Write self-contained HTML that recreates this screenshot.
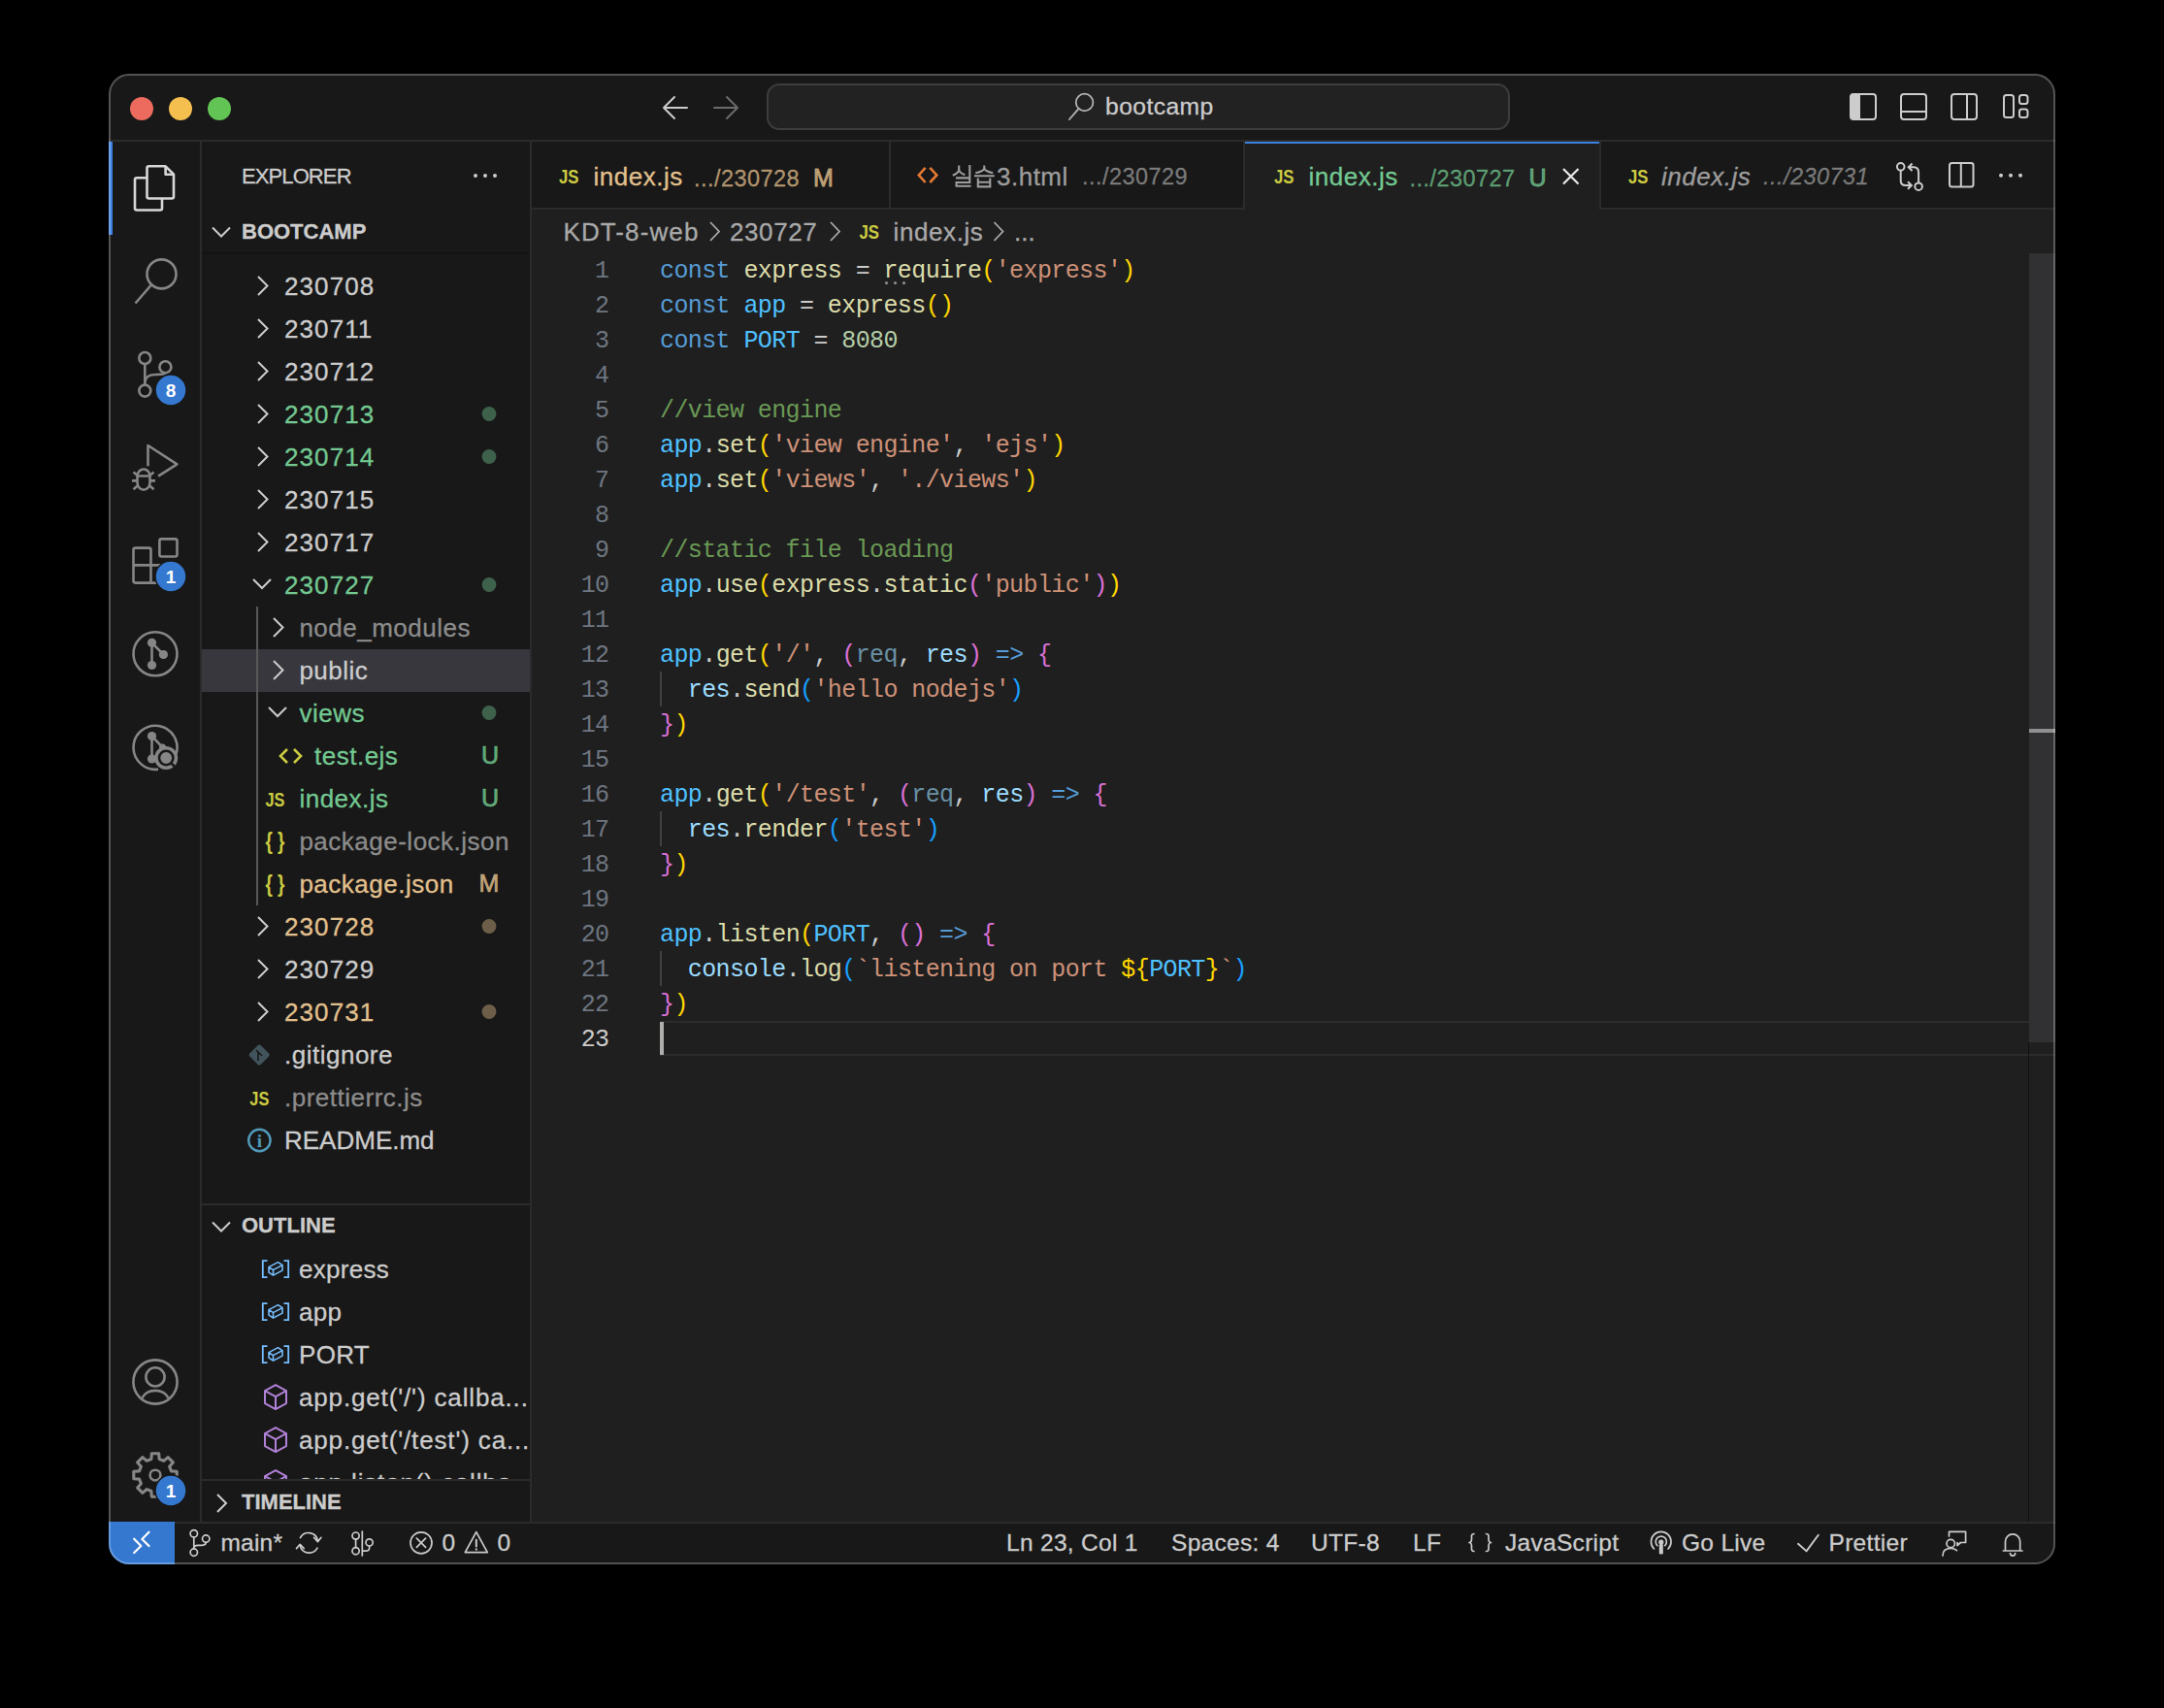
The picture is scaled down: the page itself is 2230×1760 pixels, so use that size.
<!DOCTYPE html>
<html><head><meta charset="utf-8">
<style>
html,body{margin:0;padding:0;background:#000;}
body{width:2230px;height:1760px;overflow:hidden;position:relative;font-family:"Liberation Sans",sans-serif;}
.a{position:absolute;}
#win{position:absolute;left:0;top:0;width:2230px;height:1760px;clip-path:inset(76px 112px 148px 112px round 21px);background:#181818;}
.ui{font-family:"Liberation Sans",sans-serif;font-size:26px;white-space:nowrap;line-height:1;-webkit-text-stroke:0.3px currentColor;}
.mono{font-family:"Liberation Mono",monospace;font-size:25px;letter-spacing:-0.6px;white-space:pre;line-height:36px;margin-top:2px;}
.ln{left:538.5px;width:89px;text-align:right;}
.code{left:680px;}
svg{position:absolute;overflow:visible;}
</style></head>
<body>
<div id="win">
  <!-- title bar -->
  <div class="a" style="left:112px;top:76px;width:2006px;height:70px;background:#181818;"></div>
  <div class="a" style="left:112px;top:144px;width:2006px;height:2px;background:#2b2b2b;"></div>
  <div class="a" style="left:134px;top:100px;width:24px;height:24px;border-radius:50%;background:#ec6a5e;"></div>
  <div class="a" style="left:174px;top:100px;width:24px;height:24px;border-radius:50%;background:#f4bf4f;"></div>
  <div class="a" style="left:214px;top:100px;width:24px;height:24px;border-radius:50%;background:#61c454;"></div>
  <svg style="left:0;top:0" width="2230" height="160">
    <g fill="none" stroke-linecap="round" stroke-linejoin="round">
      <path d="M684 111H708M695 100L684 111L695 122" stroke="#cccccc" stroke-width="2"/>
      <path d="M736 111H760M749 100L760 111L749 122" stroke="#6b6b6b" stroke-width="2"/>
    </g>
    <rect x="791" y="87" width="764" height="46" rx="12" fill="#222222" stroke="#3d3d3d" stroke-width="2"/>
    <g fill="none" stroke="#b5b5b5" stroke-width="1.8">
      <circle cx="1117.6" cy="105.5" r="8.8"/>
      <path d="M1111 112.6L1102 123" stroke-linecap="round"/>
    </g>
    <!-- layout icons -->
    <g fill="none" stroke="#cccccc" stroke-width="2">
      <rect x="1907" y="97" width="26" height="26" rx="3"/>
      <rect x="1959" y="97" width="26" height="26" rx="3"/>
      <path d="M1959 115H1985"/>
      <rect x="2011" y="97" width="26" height="26" rx="3"/>
      <path d="M2027 97V123"/>
      <rect x="2065" y="98" width="10" height="23" rx="2.5"/>
      <rect x="2081" y="98" width="8.5" height="9" rx="2.5"/>
      <rect x="2081" y="112.5" width="8.5" height="8.5" rx="2.5"/>
    </g>
    <path d="M1910 97H1917V123H1910A3 3 0 0 1 1907 120V100A3 3 0 0 1 1910 97Z" fill="#cccccc"/>
  </svg>
  <div class="a ui" style="left:1139px;top:98.2px;color:#cccccc;font-size:24.7px;letter-spacing:0.4px;">bootcamp</div>
  <!-- activity bar -->
  <div class="a" style="left:112px;top:146px;width:94px;height:1422px;background:#181818;"></div>
  <div class="a" style="left:206px;top:146px;width:2px;height:1422px;background:#2b2b2b;"></div>
  <div class="a" style="left:112px;top:146px;width:4px;height:96px;background:#3b82e0;"></div>
  <svg style="left:0;top:0" width="220" height="1600">
    <g fill="none" stroke-linejoin="round" stroke-linecap="butt">
      <!-- explorer -->
      <g stroke="#d7d7d7" stroke-width="2.6">
        <path d="M153.5 171.3H170.6L179 179.7V202.5A2 2 0 0 1 177 204.5H153.5A2 2 0 0 1 151.5 202.5V173.3A2 2 0 0 1 153.5 171.3Z"/>
        <path d="M170.6 171.3V179.7H179"/>
        <path d="M151.5 183.2H141A2 2 0 0 0 139 185.2V214.5A2 2 0 0 0 141 216.5H165A2 2 0 0 0 167 214.5V204.5"/>
      </g>
      <g stroke="#868686" stroke-width="2.6">
        <!-- search -->
        <circle cx="166.5" cy="282.4" r="15"/>
        <path d="M156 293.5L139.5 312.5"/>
        <!-- scm -->
        <circle cx="149.3" cy="369" r="6"/>
        <circle cx="170.4" cy="378.2" r="6"/>
        <circle cx="149.3" cy="402.6" r="6"/>
        <path d="M149.3 375V396.6"/>
        <path d="M149.3 394C150 387 155 386 161 386C167 386 170 385 170.4 384.2"/>
        <!-- debug -->
        <path d="M152.5 480.2V459L182.4 478.4L163.1 490.7"/>
        <path d="M141.5 490.5V497A6.5 7.8 0 0 0 154.5 497V490.5A6.5 7 0 0 0 141.5 490.5Z"/>
        <path d="M141.5 490.5H154.5M137.5 486.5L141.8 490M158.5 486.5L154.2 490M136 495.4H141.5M154.5 495.4H160M137.5 504.3L141.8 500.5M158.5 504.3L154.2 500.5"/>
        <!-- extensions -->
        <rect x="164.4" y="555.4" width="18.1" height="18.1" rx="2"/>
        <path d="M155.5 582.4V566.6A2 2 0 0 0 153.5 564.6H139.5A2 2 0 0 0 137.5 566.6V598.6A2 2 0 0 0 139.5 600.6H173.5V582.4H137.5M155.5 582.4V600.6"/>
        <!-- gitlens -->
        <circle cx="160" cy="673.8" r="22.5"/>
        <path d="M156.5 662.3V685.5M156.5 662.3L168.4 674.5"/>
        <!-- gitlens inspect -->
        <path d="M181.5 777A22.5 22.5 0 1 0 163 792.6"/>
        <path d="M156.5 758.6V782M156.5 758.6L167.5 770"/>
        <!-- account -->
        <circle cx="160" cy="1424" r="22.6"/>
        <circle cx="160" cy="1418.9" r="9.6"/>
        <path d="M146.5 1440.5A14.5 12 0 0 1 173.5 1440.5"/>
        <!-- gear -->
        <path stroke-width="3.1" d="M155.9 1503.5 L156.3 1497.8 L163.7 1497.8 L164.1 1503.5 L168.8 1505.4 L173.1 1501.7 L178.3 1506.9 L174.6 1511.2 L176.5 1515.9 L182.2 1516.3 L182.2 1523.7 L176.5 1524.1 L174.6 1528.8 L178.3 1533.1 L173.1 1538.3 L168.8 1534.6 L164.1 1536.5 L163.7 1542.2 L156.3 1542.2 L155.9 1536.5 L151.2 1534.6 L146.9 1538.3 L141.7 1533.1 L145.4 1528.8 L143.5 1524.1 L137.8 1523.7 L137.8 1516.3 L143.5 1515.9 L145.4 1511.2 L141.7 1506.9 L146.9 1501.7 L151.2 1505.4Z"/>
        <circle cx="160" cy="1520.1" r="5.4"/>
      </g>
    </g>
    <g fill="#868686">
      <circle cx="156.5" cy="662.3" r="4.6"/><circle cx="168.4" cy="674.5" r="4.6"/><circle cx="156.5" cy="685.5" r="4.6"/>
      <circle cx="156.5" cy="758.6" r="4.6"/><circle cx="156.5" cy="782" r="4.6"/><circle cx="167.5" cy="770" r="3.5"/>
      <circle cx="171.2" cy="781" r="12"/>
    </g>
    <circle cx="171.2" cy="781" r="7.2" fill="none" stroke="#181818" stroke-width="2.6"/>
    <path d="M176.5 786.5L180 790" stroke="#181818" stroke-width="2.5"/>
    <!-- badges -->
    <g fill="#3478d0" stroke="#181818" stroke-width="1.5">
      <circle cx="176" cy="402" r="16"/>
      <circle cx="176" cy="594" r="16"/>
      <circle cx="176" cy="1536" r="16"/>
    </g>
    <g fill="#ffffff" font-family="Liberation Sans" font-weight="bold" font-size="19" text-anchor="middle">
      <text x="176" y="409">8</text>
      <text x="176" y="601">1</text>
      <text x="176" y="1543">1</text>
    </g>
  </svg>
  <!-- sidebar -->
  <div class="a" style="left:208px;top:146px;width:338px;height:1422px;background:#181818;"></div>
  <div class="a" style="left:546px;top:146px;width:2px;height:1422px;background:#2b2b2b;"></div>
  <!-- sidebar content -->
  <div class="a ui" style="left:249px;top:171px;color:#cccccc;font-size:22px;letter-spacing:-0.9px;">EXPLORER</div>
  <svg style="left:0;top:0" width="560" height="1600">
    <g fill="#cccccc"><circle cx="490" cy="181" r="2"/><circle cx="500" cy="181" r="2"/><circle cx="510" cy="181" r="2"/></g>
    <path d="M219 234.5L228 243.5L237 234.5" stroke="#cccccc" stroke-width="2" fill="none"/>
    <path d="M219 1259.5L228 1268.5L237 1259.5" stroke="#cccccc" stroke-width="2" fill="none"/>
    <path d="M224 1540L233 1549L224 1558" stroke="#cccccc" stroke-width="2" fill="none"/>
  </svg>
  <div class="a ui" style="left:249px;top:228px;color:#cccccc;font-size:22px;font-weight:bold;">BOOTCAMP</div>
  <div class="a" style="left:208px;top:260px;width:338px;height:2px;background:#111313;"></div>
<div class="a ui" style="left:293.0px;top:282px;color:#cccccc;letter-spacing:1.1px;">230708</div>
<div class="a ui" style="left:293.0px;top:326px;color:#cccccc;letter-spacing:1.1px;">230711</div>
<div class="a ui" style="left:293.0px;top:370px;color:#cccccc;letter-spacing:1.1px;">230712</div>
<div class="a ui" style="left:293.0px;top:414px;color:#73c991;letter-spacing:1.1px;">230713</div>
<div class="a ui" style="left:293.0px;top:458px;color:#73c991;letter-spacing:1.1px;">230714</div>
<div class="a ui" style="left:293.0px;top:502px;color:#cccccc;letter-spacing:1.1px;">230715</div>
<div class="a ui" style="left:293.0px;top:546px;color:#cccccc;letter-spacing:1.1px;">230717</div>
<div class="a ui" style="left:293.0px;top:590px;color:#73c991;letter-spacing:1.1px;">230727</div>
<div class="a ui" style="left:308.4px;top:634px;color:#8c8c8c;letter-spacing:0.5px;">node_modules</div>
<div class="a" style="left:208px;top:669px;width:338px;height:44px;background:#37373d;"></div>
<div class="a ui" style="left:308.4px;top:678px;color:#cccccc;letter-spacing:0.5px;">public</div>
<div class="a ui" style="left:308.4px;top:722px;color:#73c991;letter-spacing:0.5px;">views</div>
<div class="a ui" style="left:324.0px;top:766px;color:#73c991;letter-spacing:0.5px;">test.ejs</div>
<div class="a ui" style="left:496px;top:766px;color:rgba(115,201,145,0.78);font-size:25px;-webkit-text-stroke:0.7px currentColor;">U</div>
<div class="a ui" style="left:308.4px;top:810px;color:#73c991;letter-spacing:0.5px;">index.js</div>
<div class="a ui" style="left:496px;top:810px;color:rgba(115,201,145,0.78);font-size:25px;-webkit-text-stroke:0.7px currentColor;">U</div>
<div class="a ui" style="left:308.4px;top:854px;color:#8c8c8c;letter-spacing:0.5px;">package-lock.json</div>
<div class="a ui" style="left:308.4px;top:898px;color:#e2c08d;letter-spacing:0.5px;">package.json</div>
<div class="a ui" style="left:493.5px;top:898px;color:rgba(226,192,141,0.78);font-size:25px;-webkit-text-stroke:0.7px currentColor;">M</div>
<div class="a ui" style="left:293.0px;top:942px;color:#e2c08d;letter-spacing:1.1px;">230728</div>
<div class="a ui" style="left:293.0px;top:986px;color:#cccccc;letter-spacing:1.1px;">230729</div>
<div class="a ui" style="left:293.0px;top:1030px;color:#e2c08d;letter-spacing:1.1px;">230731</div>
<div class="a ui" style="left:293.0px;top:1074px;color:#cccccc;letter-spacing:0.5px;">.gitignore</div>
<div class="a ui" style="left:293.0px;top:1118px;color:#8c8c8c;letter-spacing:0.5px;">.prettierrc.js</div>
<div class="a ui" style="left:293.0px;top:1162px;color:#cccccc;letter-spacing:0.0px;">README.md</div>
<div class="a" style="left:264px;top:625px;width:2px;height:308px;background:#585858;"></div>
<svg style="left:0;top:0" width="560" height="1600">
<path d="M266 285L275.5 294.5L266 304" stroke="#cccccc" stroke-width="2" fill="none"/>
<path d="M266 329L275.5 338.5L266 348" stroke="#cccccc" stroke-width="2" fill="none"/>
<path d="M266 373L275.5 382.5L266 392" stroke="#cccccc" stroke-width="2" fill="none"/>
<path d="M266 417L275.5 426.5L266 436" stroke="#cccccc" stroke-width="2" fill="none"/>
<circle cx="504" cy="426.5" r="7.4" fill="rgba(115,201,145,0.42)"/>
<path d="M266 461L275.5 470.5L266 480" stroke="#cccccc" stroke-width="2" fill="none"/>
<circle cx="504" cy="470.5" r="7.4" fill="rgba(115,201,145,0.42)"/>
<path d="M266 505L275.5 514.5L266 524" stroke="#cccccc" stroke-width="2" fill="none"/>
<path d="M266 549L275.5 558.5L266 568" stroke="#cccccc" stroke-width="2" fill="none"/>
<path d="M261 597L270 606L279 597" stroke="#cccccc" stroke-width="2" fill="none"/>
<circle cx="504" cy="602.5" r="7.4" fill="rgba(115,201,145,0.42)"/>
<path d="M282 637L291.5 646.5L282 656" stroke="#cccccc" stroke-width="2" fill="none"/>
<path d="M282 681L291.5 690.5L282 700" stroke="#cccccc" stroke-width="2" fill="none"/>
<path d="M277 729L286 738L295 729" stroke="#cccccc" stroke-width="2" fill="none"/>
<circle cx="504" cy="734.5" r="7.4" fill="rgba(115,201,145,0.42)"/>
<path d="M296 772L289 779L296 786M303 772L310 779L303 786" stroke="#cbcb41" stroke-width="2.6" fill="none"/>
<text x="273.4" y="831" textLength="20" lengthAdjust="spacingAndGlyphs" font-family="Liberation Sans" font-weight="bold" font-size="21" fill="#cbcb41">JS</text>
<text x="273.4" y="875" textLength="20" lengthAdjust="spacingAndGlyphs" font-family="Liberation Sans" font-size="23" font-weight="bold" fill="#cbcb41">{ }</text>
<text x="273.4" y="919" textLength="20" lengthAdjust="spacingAndGlyphs" font-family="Liberation Sans" font-size="23" font-weight="bold" fill="#cbcb41">{ }</text>
<path d="M266 945L275.5 954.5L266 964" stroke="#cccccc" stroke-width="2" fill="none"/>
<circle cx="504" cy="954.5" r="7.4" fill="rgba(226,192,141,0.42)"/>
<path d="M266 989L275.5 998.5L266 1008" stroke="#cccccc" stroke-width="2" fill="none"/>
<path d="M266 1033L275.5 1042.5L266 1052" stroke="#cccccc" stroke-width="2" fill="none"/>
<circle cx="504" cy="1042.5" r="7.4" fill="rgba(226,192,141,0.42)"/>
<rect x="259.2" y="1079" width="16" height="16" rx="2" transform="rotate(45 267.2 1087)" fill="#41535b"/>
<path d="M264 1082L270 1088M266 1084V1093" stroke="#181818" stroke-width="1.6" fill="none"/>
<text x="257.3" y="1139" textLength="20" lengthAdjust="spacingAndGlyphs" font-family="Liberation Sans" font-weight="bold" font-size="21" fill="#cbcb41">JS</text>
<circle cx="267.4" cy="1175" r="11.2" stroke="#519aba" stroke-width="2.4" fill="none"/>
<text x="267.4" y="1182" text-anchor="middle" font-family="Liberation Serif" font-weight="bold" font-size="19" fill="#519aba">i</text>
</svg>
  <div class="a" style="left:208px;top:1240px;width:338px;height:2px;background:#2b2b2b;"></div>
  <div class="a ui" style="left:249px;top:1252px;color:#cccccc;font-size:22px;font-weight:bold;">OUTLINE</div>
  <!--OUTLINE-->
<div class="a" style="left:208px;top:1286px;width:338px;height:238px;overflow:hidden;">
<div class="a" style="left:-208px;top:-1286px;width:560px;height:1600px;">
<div class="a ui" style="left:308px;top:1294.6px;color:#cccccc;letter-spacing:0.3px;">express</div>
<div class="a ui" style="left:308px;top:1338.6px;color:#cccccc;letter-spacing:0.3px;">app</div>
<div class="a ui" style="left:308px;top:1382.6px;color:#cccccc;letter-spacing:0.3px;">PORT</div>
<div class="a ui" style="left:308px;top:1426.6px;color:#cccccc;letter-spacing:0.85px;">app.get('/') callba...</div>
<div class="a ui" style="left:308px;top:1470.6px;color:#cccccc;letter-spacing:0.85px;">app.get('/test') ca...</div>
<div class="a ui" style="left:308px;top:1514.6px;color:#cccccc;letter-spacing:0.85px;">app.listen() callba...</div>
<svg style="left:0;top:0" width="560" height="1600">
<path d="M275.5 1299.1H270.8V1316.1H275.5M292.5 1299.1H297.2V1316.1H292.5" stroke="#75beff" stroke-width="1.8" fill="none"/>
<path d="M277 1305.6L286.5 1300.6L291 1303.6V1309.1L281.5 1314.1L277 1311.1ZM277 1305.6L281.5 1308.6L291 1303.6M281.5 1308.6V1314.1" stroke="#75beff" stroke-width="1.6" fill="none" stroke-linejoin="round"/>
<path d="M275.5 1343.1H270.8V1360.1H275.5M292.5 1343.1H297.2V1360.1H292.5" stroke="#75beff" stroke-width="1.8" fill="none"/>
<path d="M277 1349.6L286.5 1344.6L291 1347.6V1353.1L281.5 1358.1L277 1355.1ZM277 1349.6L281.5 1352.6L291 1347.6M281.5 1352.6V1358.1" stroke="#75beff" stroke-width="1.6" fill="none" stroke-linejoin="round"/>
<path d="M275.5 1387.1H270.8V1404.1H275.5M292.5 1387.1H297.2V1404.1H292.5" stroke="#75beff" stroke-width="1.8" fill="none"/>
<path d="M277 1393.6L286.5 1388.6L291 1391.6V1397.1L281.5 1402.1L277 1399.1ZM277 1393.6L281.5 1396.6L291 1391.6M281.5 1396.6V1402.1" stroke="#75beff" stroke-width="1.6" fill="none" stroke-linejoin="round"/>
<path d="M284 1427.1L295 1433.1V1446.1L284 1452.1L273 1446.1V1433.1ZM273 1433.1L284 1439.1L295 1433.1M284 1439.1V1452.1" stroke="#b180d7" stroke-width="2" fill="none" stroke-linejoin="round"/>
<path d="M284 1471.1L295 1477.1V1490.1L284 1496.1L273 1490.1V1477.1ZM273 1477.1L284 1483.1L295 1477.1M284 1483.1V1496.1" stroke="#b180d7" stroke-width="2" fill="none" stroke-linejoin="round"/>
<path d="M284 1515.1L295 1521.1V1534.1L284 1540.1L273 1534.1V1521.1ZM273 1521.1L284 1527.1L295 1521.1M284 1527.1V1540.1" stroke="#b180d7" stroke-width="2" fill="none" stroke-linejoin="round"/>
</svg>
</div></div>
  <div class="a" style="left:208px;top:1524px;width:338px;height:2px;background:#2b2b2b;"></div>
  <div class="a ui" style="left:249px;top:1537px;color:#cccccc;font-size:22px;font-weight:bold;">TIMELINE</div>

  <!-- editor -->
  <div class="a" style="left:548px;top:146px;width:1570px;height:68px;background:#181818;"></div>
  <div class="a" style="left:548px;top:214px;width:1570px;height:2px;background:#2b2b2b;"></div>
  <div class="a" style="left:548px;top:216px;width:1570px;height:1352px;background:#1f1f1f;"></div>
  <!-- editor content -->
  <div class="a" style="left:680px;top:1052px;width:1438px;height:36px;box-sizing:border-box;border-top:2px solid #2c2c2c;border-bottom:2px solid #2c2c2c;"></div>
  <div class="a" style="left:680px;top:692px;width:2px;height:36px;background:#404040;"></div>
  <div class="a" style="left:680px;top:836px;width:2px;height:36px;background:#404040;"></div>
  <div class="a" style="left:680px;top:980px;width:2px;height:36px;background:#404040;"></div>
  <div class="a" style="left:680px;top:1053px;width:4px;height:34px;background:#aeafad;"></div>
  <svg style="left:0;top:0" width="1000" height="300"><g fill="#8b8b8b"><circle cx="913.5" cy="291.6" r="1.6"/><circle cx="922.5" cy="291.6" r="1.6"/><circle cx="931.5" cy="291.6" r="1.6"/></g></svg>
<div class="a mono ln" style="top:260px;color:#6e7681;">1</div>
<div class="a mono code" style="top:260px;"><span style="color:#569cd6">const</span> <span style="color:#dcdcaa">express</span><span style="color:#cccccc"> = </span><span style="color:#dcdcaa">require</span><span style="color:#ffd700">(</span><span style="color:#ce9178">&#x27;express&#x27;</span><span style="color:#ffd700">)</span></div>
<div class="a mono ln" style="top:296px;color:#6e7681;">2</div>
<div class="a mono code" style="top:296px;"><span style="color:#569cd6">const</span> <span style="color:#4fc1ff">app</span><span style="color:#cccccc"> = </span><span style="color:#dcdcaa">express</span><span style="color:#ffd700">()</span></div>
<div class="a mono ln" style="top:332px;color:#6e7681;">3</div>
<div class="a mono code" style="top:332px;"><span style="color:#569cd6">const</span> <span style="color:#4fc1ff">PORT</span><span style="color:#cccccc"> = </span><span style="color:#b5cea8">8080</span></div>
<div class="a mono ln" style="top:368px;color:#6e7681;">4</div>
<div class="a mono ln" style="top:404px;color:#6e7681;">5</div>
<div class="a mono code" style="top:404px;"><span style="color:#6a9955">//view engine</span></div>
<div class="a mono ln" style="top:440px;color:#6e7681;">6</div>
<div class="a mono code" style="top:440px;"><span style="color:#4fc1ff">app</span><span style="color:#cccccc">.</span><span style="color:#dcdcaa">set</span><span style="color:#ffd700">(</span><span style="color:#ce9178">&#x27;view engine&#x27;</span><span style="color:#cccccc">, </span><span style="color:#ce9178">&#x27;ejs&#x27;</span><span style="color:#ffd700">)</span></div>
<div class="a mono ln" style="top:476px;color:#6e7681;">7</div>
<div class="a mono code" style="top:476px;"><span style="color:#4fc1ff">app</span><span style="color:#cccccc">.</span><span style="color:#dcdcaa">set</span><span style="color:#ffd700">(</span><span style="color:#ce9178">&#x27;views&#x27;</span><span style="color:#cccccc">, </span><span style="color:#ce9178">&#x27;./views&#x27;</span><span style="color:#ffd700">)</span></div>
<div class="a mono ln" style="top:512px;color:#6e7681;">8</div>
<div class="a mono ln" style="top:548px;color:#6e7681;">9</div>
<div class="a mono code" style="top:548px;"><span style="color:#6a9955">//static file loading</span></div>
<div class="a mono ln" style="top:584px;color:#6e7681;">10</div>
<div class="a mono code" style="top:584px;"><span style="color:#4fc1ff">app</span><span style="color:#cccccc">.</span><span style="color:#dcdcaa">use</span><span style="color:#ffd700">(</span><span style="color:#dcdcaa">express</span><span style="color:#cccccc">.</span><span style="color:#dcdcaa">static</span><span style="color:#da70d6">(</span><span style="color:#ce9178">&#x27;public&#x27;</span><span style="color:#da70d6">)</span><span style="color:#ffd700">)</span></div>
<div class="a mono ln" style="top:620px;color:#6e7681;">11</div>
<div class="a mono ln" style="top:656px;color:#6e7681;">12</div>
<div class="a mono code" style="top:656px;"><span style="color:#4fc1ff">app</span><span style="color:#cccccc">.</span><span style="color:#dcdcaa">get</span><span style="color:#ffd700">(</span><span style="color:#ce9178">&#x27;/&#x27;</span><span style="color:#cccccc">, </span><span style="color:#da70d6">(</span><span style="color:rgba(156,220,254,0.62)">req</span><span style="color:#cccccc">, </span><span style="color:#9cdcfe">res</span><span style="color:#da70d6">)</span> <span style="color:#569cd6">=&gt;</span> <span style="color:#da70d6">{</span></div>
<div class="a mono ln" style="top:692px;color:#6e7681;">13</div>
<div class="a mono code" style="top:692px;">  <span style="color:#9cdcfe">res</span><span style="color:#cccccc">.</span><span style="color:#dcdcaa">send</span><span style="color:#179fff">(</span><span style="color:#ce9178">&#x27;hello nodejs&#x27;</span><span style="color:#179fff">)</span></div>
<div class="a mono ln" style="top:728px;color:#6e7681;">14</div>
<div class="a mono code" style="top:728px;"><span style="color:#da70d6">}</span><span style="color:#ffd700">)</span></div>
<div class="a mono ln" style="top:764px;color:#6e7681;">15</div>
<div class="a mono ln" style="top:800px;color:#6e7681;">16</div>
<div class="a mono code" style="top:800px;"><span style="color:#4fc1ff">app</span><span style="color:#cccccc">.</span><span style="color:#dcdcaa">get</span><span style="color:#ffd700">(</span><span style="color:#ce9178">&#x27;/test&#x27;</span><span style="color:#cccccc">, </span><span style="color:#da70d6">(</span><span style="color:rgba(156,220,254,0.62)">req</span><span style="color:#cccccc">, </span><span style="color:#9cdcfe">res</span><span style="color:#da70d6">)</span> <span style="color:#569cd6">=&gt;</span> <span style="color:#da70d6">{</span></div>
<div class="a mono ln" style="top:836px;color:#6e7681;">17</div>
<div class="a mono code" style="top:836px;">  <span style="color:#9cdcfe">res</span><span style="color:#cccccc">.</span><span style="color:#dcdcaa">render</span><span style="color:#179fff">(</span><span style="color:#ce9178">&#x27;test&#x27;</span><span style="color:#179fff">)</span></div>
<div class="a mono ln" style="top:872px;color:#6e7681;">18</div>
<div class="a mono code" style="top:872px;"><span style="color:#da70d6">}</span><span style="color:#ffd700">)</span></div>
<div class="a mono ln" style="top:908px;color:#6e7681;">19</div>
<div class="a mono ln" style="top:944px;color:#6e7681;">20</div>
<div class="a mono code" style="top:944px;"><span style="color:#4fc1ff">app</span><span style="color:#cccccc">.</span><span style="color:#dcdcaa">listen</span><span style="color:#ffd700">(</span><span style="color:#4fc1ff">PORT</span><span style="color:#cccccc">, </span><span style="color:#da70d6">()</span> <span style="color:#569cd6">=&gt;</span> <span style="color:#da70d6">{</span></div>
<div class="a mono ln" style="top:980px;color:#6e7681;">21</div>
<div class="a mono code" style="top:980px;">  <span style="color:#9cdcfe">console</span><span style="color:#cccccc">.</span><span style="color:#dcdcaa">log</span><span style="color:#179fff">(</span><span style="color:#ce9178">`listening on port </span><span style="color:#ffd700">${</span><span style="color:#4fc1ff">PORT</span><span style="color:#ffd700">}</span><span style="color:#ce9178">`</span><span style="color:#179fff">)</span></div>
<div class="a mono ln" style="top:1016px;color:#6e7681;">22</div>
<div class="a mono code" style="top:1016px;"><span style="color:#da70d6">}</span><span style="color:#ffd700">)</span></div>
<div class="a mono ln" style="top:1052px;color:#cccccc;">23</div>

  <!-- scrollbar -->
  <div class="a" style="left:2091px;top:261px;width:27px;height:813px;background:#313134;"></div>
  <div class="a" style="left:2091px;top:751px;width:27px;height:4px;background:#8f8f8f;"></div>
  <div class="a" style="left:2090px;top:1074px;width:1px;height:494px;background:#111111;"></div>
  <!-- tabs -->
  <div class="a" style="left:916px;top:146px;width:2px;height:68px;background:#2b2b2b;"></div>
  <div class="a" style="left:1281px;top:146px;width:2px;height:68px;background:#2b2b2b;"></div>
  <div class="a" style="left:1283px;top:146px;width:365px;height:70px;background:#1f1f1f;"></div>
  <div class="a" style="left:1283px;top:146px;width:365px;height:2px;background:#3b82e0;"></div>
  <div class="a" style="left:1648px;top:146px;width:2px;height:68px;background:#2b2b2b;"></div>
  <svg style="left:0;top:0" width="2230" height="270">
    <g font-family="Liberation Sans" font-weight="bold" font-size="21" fill="#cbcb41">
      <text x="576" y="188.5" textLength="20.5" lengthAdjust="spacingAndGlyphs">JS</text>
      <text x="1313" y="188.5" textLength="20.5" lengthAdjust="spacingAndGlyphs">JS</text>
      <text x="1678" y="188.5" textLength="20.5" lengthAdjust="spacingAndGlyphs">JS</text>
      <text x="885.5" y="246" textLength="20.5" lengthAdjust="spacingAndGlyphs">JS</text>
    </g>
    <path d="M953.6 172.8L946.8 180.4L953.6 188M958.3 172.8L965.3 180.4L958.3 188" stroke="#e37933" stroke-width="2.6" fill="none"/>
    <!-- 실습 -->
    <g stroke="#9d9d9d" stroke-width="2.1" fill="none">
      <path d="M988.2 170.5V174.5C988.2 177 985 179.5 981.8 180.8M988.2 174.5C988.4 177 991 179 994.3 180.3"/>
      <path d="M999.3 169.9V184M985 183.4H999.3V188H985.6V191.7H1000.6"/>
      <path d="M1014.3 170.5V173C1014.3 175.5 1009 177.5 1005.3 178.3M1014.3 173C1014.3 175.5 1019.5 177.5 1023.2 178.3M1004 181.2H1024.8"/>
      <path d="M1007.8 183.6V192.4H1020.3V183.6M1007.8 187.8H1020.3"/>
    </g>
    <!-- close x -->
    <path d="M1611 174L1626.5 189.5M1626.5 174L1611 189.5" stroke="#e8e8e8" stroke-width="2.2" fill="none"/>
    <!-- editor actions -->
    <g fill="none" stroke="#cccccc" stroke-width="2">
      <circle cx="1958.7" cy="171.8" r="3.8"/>
      <circle cx="1977.1" cy="192.2" r="3.8"/>
      <path d="M1958.7 175.6V186C1958.7 189.5 1960.5 191 1963.5 191H1969.8M1966 187.2L1969.8 191L1966 194.8"/>
      <path d="M1977.1 188.4V178C1977.1 174.5 1975.3 172.3 1972.3 172.3H1967M1970.5 168.5L1966.7 172.3L1970.5 176.1"/>
      <rect x="2009" y="168" width="24.5" height="24.5" rx="2.5"/>
      <path d="M2020.8 168V192.5"/>
    </g>
    <g fill="#cccccc"><circle cx="2062" cy="180.8" r="2"/><circle cx="2072" cy="180.8" r="2"/><circle cx="2082" cy="180.8" r="2"/></g>
    <!-- breadcrumb chevrons -->
    <g fill="none" stroke="#a9a9a9" stroke-width="1.8">
      <path d="M732 229L741 238.5L732 248"/>
      <path d="M856 229L865 238.5L856 248"/>
      <path d="M1024.5 229L1033.5 238.5L1024.5 248"/>
    </g>
  </svg>
  <div class="a ui" style="left:611.5px;top:169px;color:#e2c08d;letter-spacing:0.5px;">index.js</div>
  <div class="a ui" style="left:715px;top:170.5px;color:rgba(226,192,141,0.72);font-size:23.5px;letter-spacing:0.45px;">.../230728<span style="margin-left:14px;font-size:25px;-webkit-text-stroke:0.9px currentColor;">M</span></div>
  <div class="a ui" style="left:1027px;top:169px;color:#9d9d9d;letter-spacing:0.5px;">3.html</div>
  <div class="a ui" style="left:1115px;top:170.5px;color:rgba(157,157,157,0.72);font-size:23.5px;letter-spacing:0.45px;">.../230729</div>
  <div class="a ui" style="left:1348.5px;top:169px;color:#73c991;letter-spacing:0.5px;">index.js</div>
  <div class="a ui" style="left:1452.5px;top:170.5px;color:rgba(115,201,145,0.72);font-size:23.5px;letter-spacing:0.45px;">.../230727<span style="margin-left:14px;font-size:25px;-webkit-text-stroke:0.9px currentColor;">U</span></div>
  <div class="a ui" style="left:1712px;top:169px;color:#9d9d9d;font-style:italic;letter-spacing:0.5px;">index.js</div>
  <div class="a ui" style="left:1817px;top:170.5px;color:rgba(157,157,157,0.72);font-size:23.5px;font-style:italic;letter-spacing:0.45px;">.../230731</div>
  <!-- breadcrumbs -->
  <div class="a ui" style="left:580.5px;top:226px;color:#a9a9a9;letter-spacing:1.1px;">KDT-8-web</div>
  <div class="a ui" style="left:752px;top:226px;color:#a9a9a9;letter-spacing:0.6px;">230727</div>
  <div class="a ui" style="left:920.5px;top:226px;color:#a9a9a9;letter-spacing:0.6px;">index.js</div>
  <div class="a ui" style="left:1045px;top:226px;color:#a9a9a9;">...</div>
  <!-- status bar -->
  <div class="a" style="left:112px;top:1568px;width:2006px;height:44px;background:#181818;"></div>
  <div class="a" style="left:112px;top:1568px;width:2006px;height:2px;background:#2b2b2b;"></div>
  <div class="a" style="left:112px;top:1568px;width:68px;height:44px;background:#3478d0;"></div>
  <svg style="left:0;top:1540px" width="2230" height="80" viewBox="0 1540 2230 80">
    <g fill="none" stroke-linecap="round" stroke-linejoin="round">
      <path d="M138.2 1585.7L145.3 1592.9L138.2 1600.1M153.5 1578.7L146.4 1585.9L153.5 1593.1" stroke="#ffffff" stroke-width="2.2"/>
      <g stroke="#cccccc" stroke-width="1.7">
        <!-- branch -->
        <circle cx="199.8" cy="1580.3" r="3.7"/><circle cx="199.8" cy="1599.6" r="3.7"/><circle cx="212.2" cy="1585.6" r="3.7"/>
        <path d="M199.8 1584V1595.9M199.8 1595.5C199.8 1593 201 1592.3 204 1592.3H208C211 1592.3 212.2 1591 212.2 1589.3"/>
        <!-- sync -->
        <path d="M309.5 1584.5A9.6 9.6 0 0 1 327.3 1587.2M327 1595.2A9.6 9.6 0 0 1 309.2 1592.6"/>
        <path d="M323.5 1584.3L327.4 1588.6L331 1584.3M305.5 1595.6L309.2 1591.3L313.2 1595.6"/>
        <!-- git graph -->
        <circle cx="366.6" cy="1582.6" r="3.6"/><circle cx="366.6" cy="1598.2" r="3.6"/><circle cx="380.6" cy="1589.4" r="3.6"/>
        <path d="M366.6 1586.2V1594.6M373.3 1578V1603M380.6 1593V1595C380.6 1597 379 1598.2 377 1598.2H373.3"/>
        <!-- errors -->
        <circle cx="434" cy="1589.8" r="11"/>
        <path d="M429.4 1585.2L438.6 1594.4M438.6 1585.2L429.4 1594.4"/>
        <path d="M490.8 1578.6L502.3 1599.6H479.3Z"/>
        <path d="M490.8 1586.8V1593.6M490.8 1596.2V1596.8" stroke-width="2"/>
        <!-- right side -->
        <path d="M1519 1580.5C1516 1580.5 1516.5 1582.5 1516.5 1585.5C1516.5 1588.5 1515.5 1589.5 1514 1589.5C1515.5 1589.5 1516.5 1590.5 1516.5 1593.5C1516.5 1596.5 1516 1598.5 1519 1598.5M1531.5 1580.5C1534.5 1580.5 1534 1582.5 1534 1585.5C1534 1588.5 1535 1589.5 1536.5 1589.5C1535 1589.5 1534 1590.5 1534 1593.5C1534 1596.5 1534.5 1598.5 1531.5 1598.5"/>
        <path d="M1704.5 1596A10.3 10.3 0 1 1 1719 1596M1707.8 1592.6A5.6 5.6 0 1 1 1715.8 1592.6"/>
        <path d="M1853 1590.8L1861.5 1598.4L1873.8 1581.7" stroke-width="1.9"/>
        <circle cx="2010.2" cy="1590.5" r="4.2"/>
        <path d="M2002 1603C2002 1597.5 2005.5 1595.5 2010.2 1595.5C2013 1595.5 2015 1596.3 2016.5 1597.7M2008.5 1583V1578.3H2025.6V1589.5H2020.5L2017 1592.5V1589.5"/>
        <path d="M2066.5 1598V1588.5A7.6 7.6 0 0 1 2081.7 1588.5V1598H2064.3H2084M2071.5 1600.5A2.6 2.6 0 0 0 2076.7 1600.5"/>
      </g>
    </g>
    <g fill="#cccccc"><circle cx="1711.8" cy="1589" r="2.6"/><rect x="1709.8" y="1591" width="4" height="10.5" rx="1.2"/></g>
  </svg>
  <div class="a ui" style="left:227.5px;top:1578px;color:#cccccc;font-size:24.5px;letter-spacing:0.2px;">main*</div>
  <div class="a ui" style="left:455.5px;top:1578px;color:#cccccc;font-size:24.5px;">0</div>
  <div class="a ui" style="left:512.5px;top:1578px;color:#cccccc;font-size:24.5px;">0</div>
  <div class="a ui" style="left:1037px;top:1578px;color:#cccccc;font-size:24.5px;letter-spacing:0.3px;">Ln 23, Col 1</div>
  <div class="a ui" style="left:1207px;top:1578px;color:#cccccc;font-size:24.5px;letter-spacing:0.3px;">Spaces: 4</div>
  <div class="a ui" style="left:1351px;top:1578px;color:#cccccc;font-size:24.5px;letter-spacing:0.3px;">UTF-8</div>
  <div class="a ui" style="left:1456px;top:1578px;color:#cccccc;font-size:24.5px;letter-spacing:0.3px;">LF</div>
  <div class="a ui" style="left:1551px;top:1578px;color:#cccccc;font-size:24.5px;letter-spacing:0.3px;">JavaScript</div>
  <div class="a ui" style="left:1733px;top:1578px;color:#cccccc;font-size:24.5px;letter-spacing:0.3px;">Go Live</div>
  <div class="a ui" style="left:1884.5px;top:1578px;color:#cccccc;font-size:24.5px;letter-spacing:0.3px;">Prettier</div>
</div>
<!-- window border -->
<div class="a" style="left:112px;top:76px;width:2006px;height:1536px;box-sizing:border-box;border:2px solid rgba(255,255,255,0.26);border-radius:21px;"></div>
</body></html>
